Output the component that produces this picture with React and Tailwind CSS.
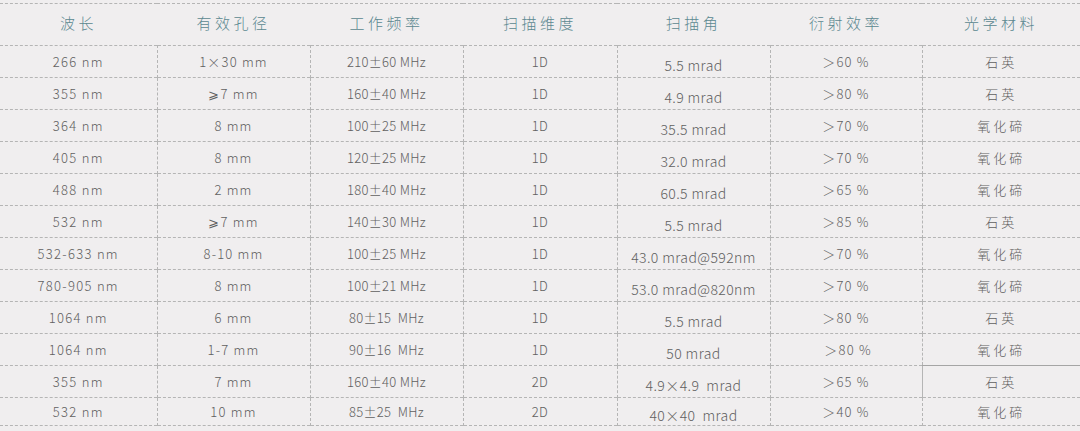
const headers = ['波长', '有效孔径', '工作频率', '扫描维度', '扫描角', '衍射效率', '光学材料'];

const rows = [
  ['266 nm', '1×30 mm', '210±60 MHz', '1D', '5.5 mrad', '＞60 %', '石英'],
  ['355 nm', '⩾7 mm', '160±40 MHz', '1D', '4.9 mrad', '＞80 %', '石英'],
  ['364 nm', '8 mm', '100±25 MHz', '1D', '35.5 mrad', '＞70 %', '氧化碲'],
  ['405 nm', '8 mm', '120±25 MHz', '1D', '32.0 mrad', '＞70 %', '氧化碲'],
  ['488 nm', '2 mm', '180±40 MHz', '1D', '60.5 mrad', '＞65 %', '氧化碲'],
  ['532 nm', '⩾7 mm', '140±30 MHz', '1D', '5.5 mrad', '＞85 %', '石英'],
  ['532-633 nm', '8-10 mm', '100±25 MHz', '1D', '43.0 mrad@592nm', '＞70 %', '氧化碲'],
  ['780-905 nm', '8 mm', '100±21 MHz', '1D', '53.0 mrad@820nm', '＞70 %', '氧化碲'],
  ['1064 nm', '6 mm', '80±15  MHz', '1D', '5.5 mrad', '＞80 %', '石英'],
  ['1064 nm', '1-7 mm', '90±16  MHz', '1D', '50 mrad', ' ＞80 %', '氧化碲'],
  ['355 nm', '7 mm', '160±40 MHz', '2D', '4.9×4.9  mrad', '＞65 %', '石英'],
  ['532 nm', '10 mm', '85±25  MHz', '2D', '40×40  mrad', '＞40 %', '氧化碲'],
];

// per-column text tweaks
const colClass = [
  'tracking-[1.3px]',
  'tracking-[1.2px]',
  'tracking-[0.3px]',
  'tracking-[0.5px]',
  'text-[14px] tracking-[0.4px] pt-[7px] whitespace-nowrap',
  'tracking-[1.2px]',
  'tracking-[3px]',
];

export default function App() {
  return (
    <div
      className="w-[1080px] h-[431px] bg-[#f0eeef] overflow-hidden pt-[3px] font-light"
      style={{ fontFamily: '"Noto Sans CJK SC", "Noto Sans", sans-serif' }}
    >
      <table className="w-full table-fixed border-collapse">
        <colgroup>
          <col className="w-[157px]" />
          <col className="w-[153px]" />
          <col className="w-[153px]" />
          <col className="w-[154px]" />
          <col className="w-[153px]" />
          <col className="w-[152px]" />
          <col className="w-[158px]" />
        </colgroup>
        <thead>
          <tr className="h-[42px] border-t border-b border-dashed border-[#b5b5b5]">
            {headers.map((h) => (
              <th key={h} className="font-light text-[15px] tracking-[3.5px] text-[#5b8890] text-center align-middle pb-[2px]">
                {h}
              </th>
            ))}
          </tr>
        </thead>
        <tbody>
          {rows.map((row, i) => (
            <tr
              key={i}
              className={`${i === rows.length - 1 ? 'h-[28px]' : 'h-[32px]'} border-b border-dashed border-[#b5b5b5]`}
            >
              {row.map((cell, j) => (
                <td
                  key={j}
                  className={`${colClass[j]} ${j > 0 ? 'border-l border-dashed border-[#b5b5b5]' : ''} ${
                    i === 10 && j === 6 ? 'border-t border-solid border-t-[#a5a5a5]' : ''
                  } text-[13px] text-[#606060] text-center align-middle whitespace-pre leading-none`}
                >
                  {cell}
                </td>
              ))}
            </tr>
          ))}
        </tbody>
      </table>
    </div>
  );
}
